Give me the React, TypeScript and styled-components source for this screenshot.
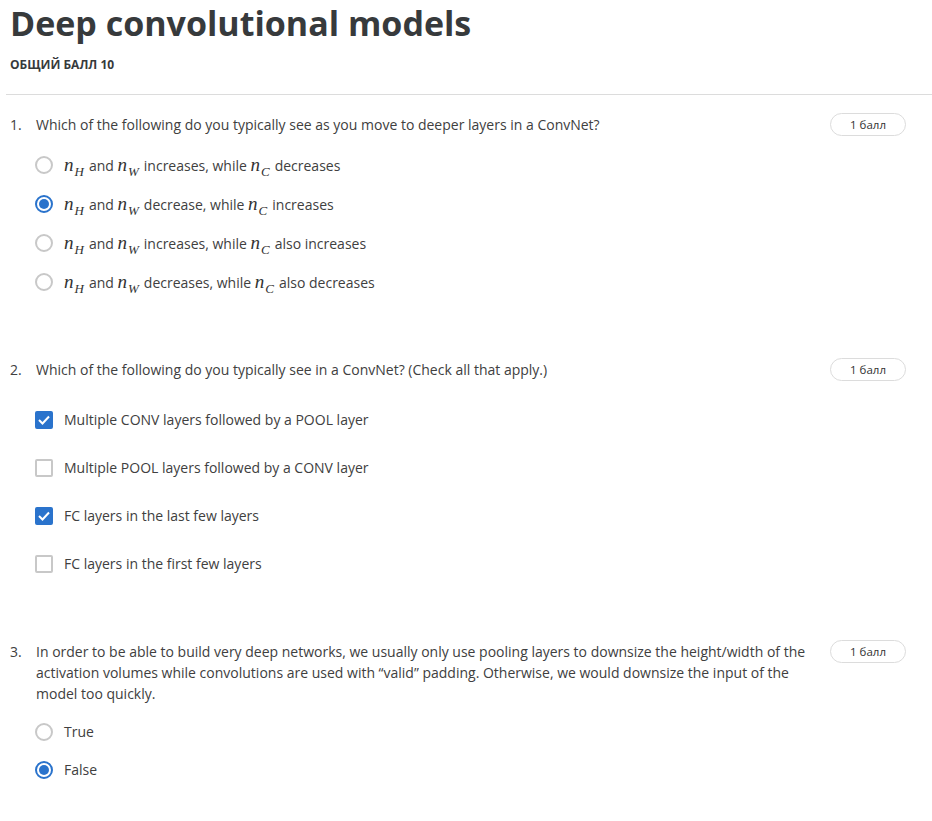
import React from "react";
import styled, { createGlobalStyle } from "styled-components";

const GlobalStyle = createGlobalStyle`
  body {
    margin: 0;
    background: #fff;
    font-family: "Open Sans", "Liberation Sans", sans-serif;
    color: #404040;
  }
`;

const Page = styled.div`
  padding: 0 26px 40px 10px;
`;

const Title = styled.h1`
  margin: 0;
  font-size: 34px;
  line-height: 1.37;
  font-weight: 700;
  color: #373a3c;
`;

const Subtitle = styled.div`
  margin-top: 10px;
  font-size: 12px;
  line-height: 16px;
  font-weight: 700;
  color: #373a3c;
`;

const Divider = styled.hr`
  margin: 21px -26px 0 -4px;
  border: 0;
  border-top: 1px solid #dcdcdc;
`;

const Question = styled.section<{ $gap: number }>`
  margin-top: ${(p) => p.$gap}px;
`;

const QuestionRow = styled.div`
  display: flex;
  align-items: flex-start;
`;

const Num = styled.span`
  width: 26px;
  flex-shrink: 0;
  font-size: 14px;
  line-height: 21px;
  padding-top: 1px;
`;

const Prompt = styled.div`
  flex: 1;
  font-size: 14px;
  line-height: 21px;
  padding-top: 1px;
  padding-right: 20px;
`;

const Badge = styled.span`
  flex-shrink: 0;
  width: 76px;
  height: 23px;
  box-sizing: border-box;
  border: 1px solid #dcdcdc;
  border-radius: 12px;
  display: flex;
  align-items: center;
  justify-content: center;
  font-size: 11.5px;
  color: #333;
`;

const Options = styled.div<{ $top: number }>`
  margin-top: ${(p) => p.$top}px;
  padding-left: 25px;
`;

const Option = styled.div<{ $h: number }>`
  height: ${(p) => p.$h}px;
  display: flex;
  align-items: center;
  gap: 11px;
  font-size: 14px;
  color: #404040;
`;

const Radio = styled.span<{ $on?: boolean }>`
  width: 18px;
  height: 18px;
  box-sizing: border-box;
  border-radius: 50%;
  border: 2px solid ${(p) => (p.$on ? "#2a73cc" : "#c8c8c8")};
  display: flex;
  align-items: center;
  justify-content: center;
  flex-shrink: 0;
  &::after {
    content: "";
    display: ${(p) => (p.$on ? "block" : "none")};
    width: 10px;
    height: 10px;
    border-radius: 50%;
    background: #2a73cc;
  }
`;

const Check = styled.span<{ $on?: boolean }>`
  width: 18px;
  height: 18px;
  box-sizing: border-box;
  border-radius: 2px;
  border: 2px solid ${(p) => (p.$on ? "#2a73cc" : "#c8c8c8")};
  background: ${(p) => (p.$on ? "#2a73cc" : "#fff")};
  display: flex;
  align-items: center;
  justify-content: center;
  flex-shrink: 0;
`;

const MathVar = styled.span`
  font-family: "Liberation Serif", "DejaVu Serif", serif;
  font-style: italic;
  font-size: 19px;
  color: #333;
  margin-right: 5px;
  sub {
    font-size: 13px;
    vertical-align: -5px;
    line-height: 0;
    margin-left: 1px;
  }
`;

const N = ({ s }: { s: string }) => (
  <MathVar>
    n<sub>{s}</sub>
  </MathVar>
);

const Tick = () => (
  <svg width="12" height="10" viewBox="0 0 12 10">
    <path d="M1 5 L4.5 8.5 L11 1.5" fill="none" stroke="#fff" strokeWidth="2" />
  </svg>
);

const q1 = [
  ["increases", "decreases"],
  ["decrease", "increases"],
  ["increases", "also increases"],
  ["decreases", "also decreases"],
];

const q2 = [
  { text: "Multiple CONV layers followed by a POOL layer", on: true },
  { text: "Multiple POOL layers followed by a CONV layer", on: false },
  { text: "FC layers in the last few layers", on: true },
  { text: "FC layers in the first few layers", on: false },
];

export default function App() {
  return (
    <>
      <GlobalStyle />
      <Page>
        <Title>Deep convolutional models</Title>
        <Subtitle>ОБЩИЙ БАЛЛ 10</Subtitle>
        <Divider />

        <Question $gap={18}>
          <QuestionRow>
            <Num>1.</Num>
            <Prompt>
              Which of the following do you typically see as you move to deeper
              layers in a ConvNet?
            </Prompt>
            <Badge>1 балл</Badge>
          </QuestionRow>
          <Options $top={10}>
            {q1.map(([a, b], i) => (
              <Option key={i} $h={39}>
                <Radio $on={i === 1} />
                <span>
                  <N s="H" />
                  and <N s="W" />
                  {a}, while <N s="C" />
                  {b}
                </span>
              </Option>
            ))}
          </Options>
        </Question>

        <Question $gap={56}>
          <QuestionRow>
            <Num>2.</Num>
            <Prompt>
              Which of the following do you typically see in a ConvNet? (Check
              all that apply.)
            </Prompt>
            <Badge>1 балл</Badge>
          </QuestionRow>
          <Options $top={15}>
            {q2.map((o) => (
              <Option key={o.text} $h={48}>
                <Check $on={o.on}>{o.on && <Tick />}</Check>
                <span>{o.text}</span>
              </Option>
            ))}
          </Options>
        </Question>

        <Question $gap={52}>
          <QuestionRow>
            <Num>3.</Num>
            <Prompt>
              In order to be able to build very deep networks, we usually only
              use pooling layers to downsize the height/width of the activation
              volumes while convolutions are used with “valid” padding.
              Otherwise, we would downsize the input of the model too quickly.
            </Prompt>
            <Badge>1 балл</Badge>
          </QuestionRow>
          <Options $top={9}>
            <Option $h={38}>
              <Radio />
              <span>True</span>
            </Option>
            <Option $h={38}>
              <Radio $on />
              <span>False</span>
            </Option>
          </Options>
        </Question>
      </Page>
    </>
  );
}
